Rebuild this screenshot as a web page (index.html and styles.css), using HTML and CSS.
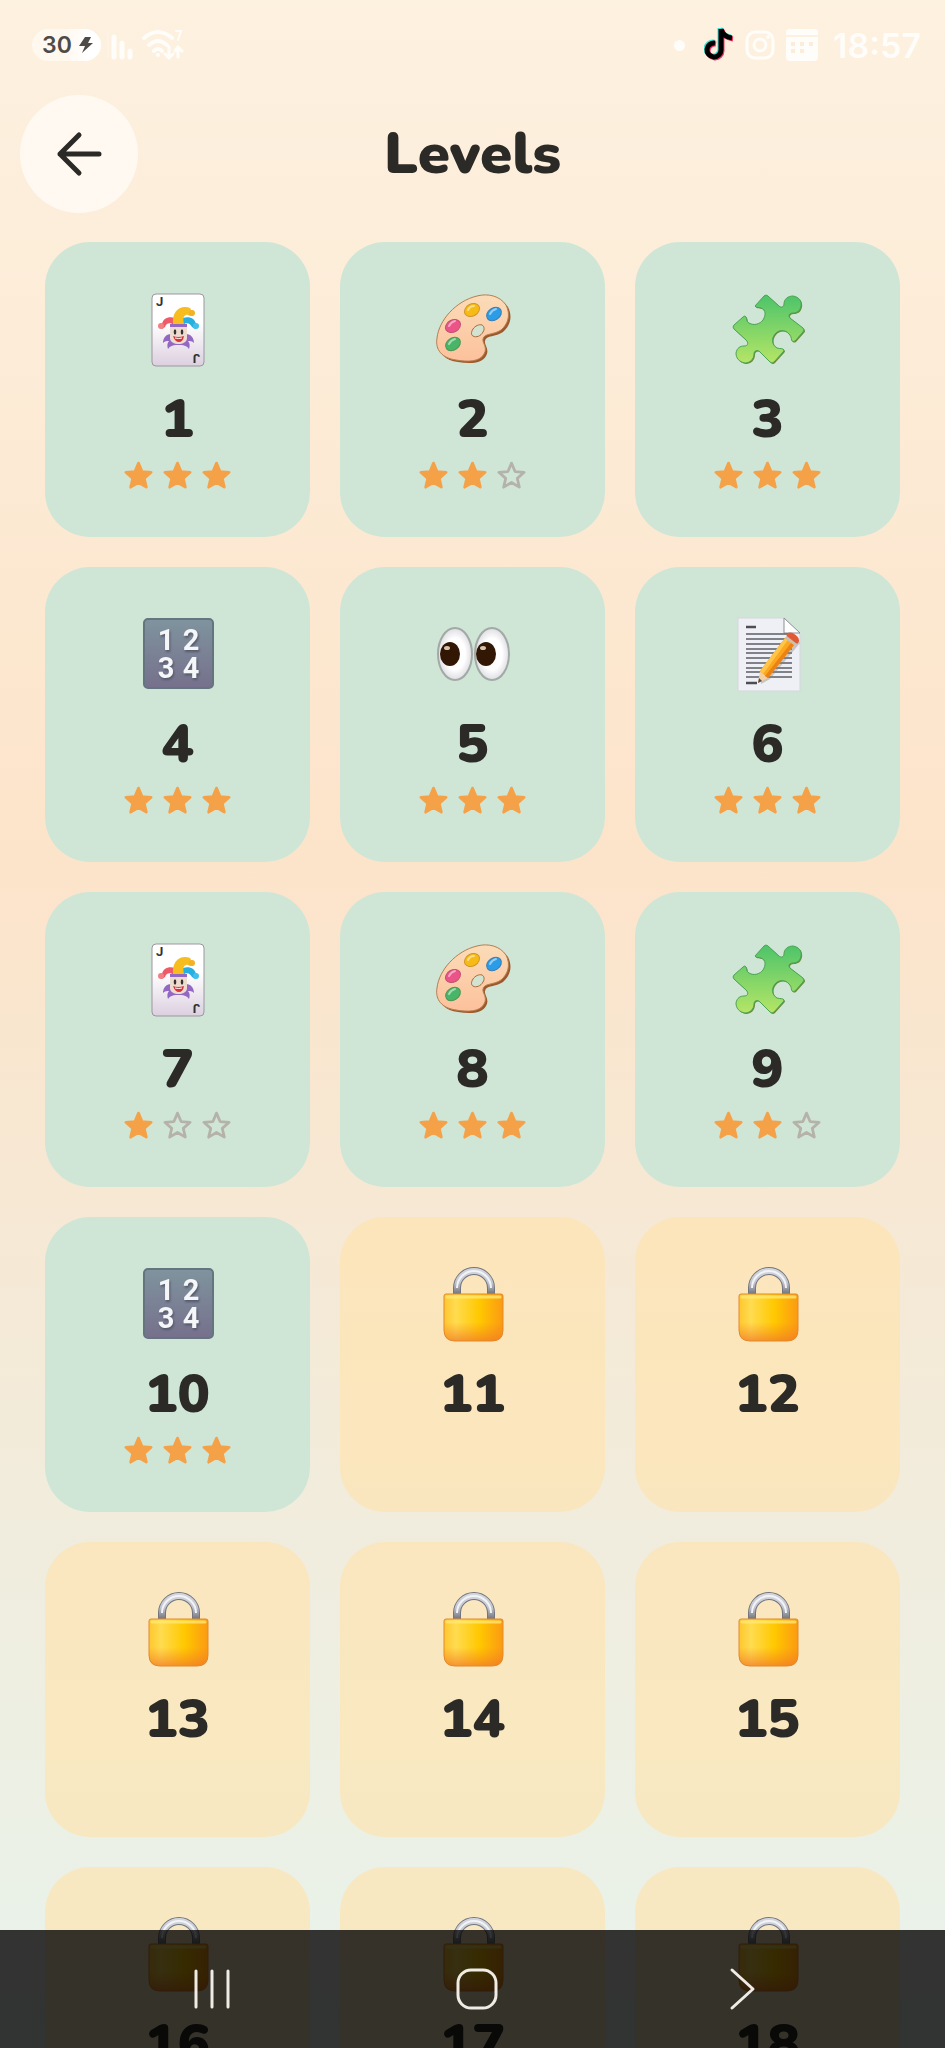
FILE: index.html
```
<!DOCTYPE html>
<html lang="en">

<head>
    <meta charset="UTF-8">
    <meta name="viewport" content="width=device-width, initial-scale=1.0">
    <title>Levels</title>
    <link rel="stylesheet" href="styles.css">
</head>

<body>
    <!-- icon shapes, reused by the cards -->
    <svg class="sprite" width="0" height="0" aria-hidden="true">
        <defs>
            <linearGradient id="paper" x1="0" y1="0" x2="0" y2="1">
                <stop offset="0.4" stop-color="#ffffff" />
                <stop offset="1" stop-color="#dccfdf" />
            </linearGradient>
            <linearGradient id="wood" x1="0" y1="0" x2="0" y2="1">
                <stop offset="0" stop-color="#fbdcb8" />
                <stop offset="1" stop-color="#fcc19c" />
            </linearGradient>
            <linearGradient id="green" x1="0" y1="0" x2="0" y2="1">
                <stop offset="0" stop-color="#4cc46a" />
                <stop offset="1" stop-color="#b6e566" />
            </linearGradient>
            <linearGradient id="slate" x1="0" y1="0" x2="0" y2="1">
                <stop offset="0" stop-color="#7f949e" />
                <stop offset="1" stop-color="#76708c" />
            </linearGradient>
            <linearGradient id="gold" x1="0" y1="0" x2="1" y2="0">
                <stop offset="0" stop-color="#ffc62f" />
                <stop offset="0.2" stop-color="#ffdc50" />
                <stop offset="0.6" stop-color="#ffc800" />
                <stop offset="1" stop-color="#fb9a12" />
            </linearGradient>
            <linearGradient id="goldShade" x1="0" y1="0" x2="0" y2="1">
                <stop offset="0.6" stop-color="#f58220" stop-opacity="0" />
                <stop offset="1" stop-color="#f0752a" stop-opacity="0.7" />
            </linearGradient>
            <linearGradient id="steel" gradientUnits="userSpaceOnUse" x1="0" y1="0" x2="0" y2="26">
                <stop offset="0" stop-color="#d6d8e0" />
                <stop offset="0.6" stop-color="#c4c6cf" />
                <stop offset="1" stop-color="#787a84" />
            </linearGradient>
            <radialGradient id="eyeball">
                <stop offset="0.6" stop-color="#ffffff" />
                <stop offset="1" stop-color="#dedee4" />
            </radialGradient>
        </defs>

        <symbol id="joker" viewBox="0 0 76 76">
            <rect x="12" y="2" width="52" height="72" rx="4" fill="url(#paper)" stroke="#9d969f" />
            <text class="joker-letter" x="16" y="14">J</text>
            <text class="joker-letter" x="16" y="14" transform="rotate(180 38 38)">J</text>
            <path d="M31 42c-5 0-8 4-8 9 2-2 4-2 6-2-2 2-2 5-1 8 2-3 5-4 8-4h5c3 0 6 1 8 4 1-3 1-6-1-8 2 0 4 0 6 2 0-5-3-9-8-9z" fill="#9368c4" />
            <path d="M34 33c-4-3-8-2-9 2l-3 2c-3-1-3-4 0-5 1-5 6-8 13-6z" fill="#ef5a68" />
            <path d="M43 33c3-3 7-2 9 2l3 2c3-1 4-4 1-5-1-5-6-8-13-6z" fill="#27afe0" />
            <path d="M33 32c-1-10 4-17 12-17 4 0 6 1 6 3 4 0 4 6 0 6-2 0-3-2-5-1-3 1-3 4-2 9z" fill="#f7bd1e" />
            <circle cx="21" cy="34" r="3" fill="#f27f82" />
            <circle cx="52" cy="21" r="3" fill="#f2b129" />
            <circle cx="56" cy="34" r="3" fill="#45bfe8" />
            <path d="M30 32h17v14c0 8-17 8-17 0z" fill="#eddccf" />
            <path d="M30 32h17v3H30z" fill="#9368c4" />
            <ellipse cx="35" cy="40" rx="1.3" ry="2.8" fill="#333" />
            <ellipse cx="42" cy="40" rx="1.3" ry="2.8" fill="#333" />
            <path d="M33 44q5 2 11 0q-1 6-5 6t-6-6z" fill="#d8343c" />
            <path d="M35 46q4 1 7 0" stroke="#fff" fill="none" />
        </symbol>

        <symbol id="palette" viewBox="0 0 76 76">
            <path d="M42 5C53 2 66 5 72 14c5 10 2 19-5 25-7 5-17 3-18 9-1 4 5 8 1 15-4 8-17 8-28 6C8 67 1 59 3 47 5 28 22 10 42 5z" fill="#9c5a2c" transform="translate(1 1)" />
            <path d="M42 4C53 1 65 4 71 13c5 10 2 19-5 25-7 5-17 3-18 9-1 4 5 8 1 15-4 8-17 8-28 6C7 66 0 58 2 46 4 28 21 9 42 4z" fill="url(#wood)" stroke="#b77d4e" />
            <path d="M38 44c3 2 8 0 10-4 2-3 1-6-1-7-3-1-7 1-9 4s-2 6 0 7z" fill="#d2e3d2" stroke="#a8693c" />
            <ellipse cx="37" cy="18" rx="8" ry="6" transform="rotate(-30 37 18)" fill="#f6bb15" stroke="#d2952a" />
            <ellipse cx="59" cy="22" rx="8" ry="6" transform="rotate(-35 59 22)" fill="#2b9ce8" stroke="#3a7eb0" />
            <ellipse cx="18" cy="34" rx="8" ry="6" transform="rotate(-30 18 34)" fill="#ec5389" stroke="#c2506e" />
            <ellipse cx="18" cy="52" rx="8" ry="6" transform="rotate(-35 18 52)" fill="#48b567" stroke="#4d9456" />
            <path d="M33 18q2-4 6-4M55 22q2-4 6-5M14 34q2-4 6-5M14 52q2-4 6-5" stroke="#fff" stroke-opacity="0.5" stroke-width="2" fill="none" stroke-linecap="round" />
        </symbol>

        <symbol id="puzzle" viewBox="0 0 76 76">
            <path d="M25 14L34 4q2-2 4 0l11 10c2 2 5 1 5-2 0-5 4-8 9-8 6 1 9 5 8 10-1 5-4 7-8 7-4 0-5 3-3 5l13 10q2 2 0 4l-8 9q-2 1-3 0c-1-1 0-4-3-7-4-5-11-4-14 0-4 5-3 11 2 14 3 1 6 0 7 2q0 1-1 2L44 70q-2 2-4 0L30 60c-3-3-6-1-6 2 0 5-4 9-9 9-6-1-9-5-9-10 1-5 4-7 8-7 4 0 5-3 2-6L4 37q-2-2 0-4l9-8q2-2 3 0c1 2 0 4 3 6 5 3 11 1 14-3 3-5 3-10-2-12-3-1-5 0-6-2z" fill="#6d8a3c" transform="translate(1 1)" />
            <path d="M25 14L34 4q2-2 4 0l11 10c2 2 5 1 5-2 0-5 4-8 9-8 6 1 9 5 8 10-1 5-4 7-8 7-4 0-5 3-3 5l13 10q2 2 0 4l-8 9q-2 1-3 0c-1-1 0-4-3-7-4-5-11-4-14 0-4 5-3 11 2 14 3 1 6 0 7 2q0 1-1 2L44 70q-2 2-4 0L30 60c-3-3-6-1-6 2 0 5-4 9-9 9-6-1-9-5-9-10 1-5 4-7 8-7 4 0 5-3 2-6L4 37q-2-2 0-4l9-8q2-2 3 0c1 2 0 4 3 6 5 3 11 1 14-3 3-5 3-10-2-12-3-1-5 0-6-2z" fill="url(#green)" stroke="#4ba352" />
        </symbol>

        <symbol id="numbers" viewBox="0 0 76 76">
            <rect x="4" y="2" width="69" height="69" rx="4" fill="url(#slate)" stroke="#65757f" stroke-width="2" />
            <g class="digits">
                <text x="26" y="33">1</text>
                <text x="51" y="33">2</text>
                <text x="26" y="61">3</text>
                <text x="51" y="61">4</text>
            </g>
        </symbol>

        <symbol id="eyes" viewBox="0 0 76 76">
            <g fill="url(#eyeball)" stroke="#a3aaa5" stroke-width="2">
                <ellipse cx="20" cy="37" rx="17" ry="26" />
                <ellipse cx="57" cy="37" rx="17" ry="26" />
            </g>
            <g fill="#321705">
                <ellipse cx="15" cy="37" rx="10" ry="12" />
                <ellipse cx="51" cy="37" rx="10" ry="12" />
            </g>
            <g fill="#d8c4ad">
                <ellipse cx="12" cy="31" rx="3" ry="2" />
                <ellipse cx="48" cy="31" rx="3" ry="2" />
            </g>
        </symbol>

        <symbol id="memo" viewBox="0 0 76 76">
            <path d="M8 1h46l16 16v57H8z" fill="#eff0f5" stroke="#d3d6dc" />
            <path d="M54 1v15h16z" fill="#fff" stroke="#8c8f96" />
            <path d="M16 17h46M16 22h46M16 27h46M16 32h46M16 36h46M16 41h46M16 46h46M16 51h46M16 55h46M16 60h46" stroke="#5c5e66" stroke-width="1.5" />
            <path d="M16 10h10M16 66h11" stroke="#4c4e56" stroke-width="2.5" />
            <path d="M31 67l9-5 30-36-6-8-5-2-29 38z" fill="#8a8078" opacity="0.4" />
            <path d="M28 66l2-12 8 7z" fill="#f3cfa2" />
            <path d="M28 66l1-5 3 3z" fill="#5a4a44" />
            <path d="M30 54L55 21l9 7-26 33z" fill="#fda71d" />
            <path d="M30 54L55 21l3 2-25 34z" fill="#ffc44a" />
            <path d="M35 59L61 26l3 2-26 33z" fill="#ec8215" />
            <path d="M55 21l3-3 9 7-3 3z" fill="#cdbfb2" />
            <path d="M58 18c3-3 12 4 9 7z" fill="#e05b35" stroke="#e05b35" stroke-width="3" stroke-linejoin="round" />
        </symbol>

        <symbol id="lock" viewBox="0 0 76 76">
            <path d="M22 28v-7a17 17 0 0 1 34 0v7" fill="none" stroke="#73757e" stroke-width="8" />
            <path d="M22 28v-7a17 17 0 0 1 34 0v7" fill="none" stroke="url(#steel)" stroke-width="6" />
            <path d="M22 21a17 17 0 0 1 34 0" fill="none" stroke="#f2f3f7" stroke-width="2" />
            <path d="M11 27h55q2 0 2 2v34q0 11-11 11H20q-11 0-11-11V29q0-2 2-2z" fill="url(#gold)" />
            <path d="M11 27h55q2 0 2 2v34q0 11-11 11H20q-11 0-11-11V29q0-2 2-2z" fill="url(#goldShade)" stroke="#e18a2c" />
            <path d="M12 30h53" stroke="#ffe873" stroke-width="3" stroke-linecap="round" opacity="0.8" />
        </symbol>

        <symbol id="star" viewBox="0 0 24 24">
            <path d="M12 3l2.600 6.100 6.600.600-5 4.400 1.500 6.400-5.700-3.400-5.700 3.400 1.500-6.400-5-4.400 6.600-.600z" stroke-width="2" stroke-linejoin="round" />
        </symbol>
    </svg>

    <div class="app">
        <div class="status-bar">
            <div class="status-left">
                <span class="battery">30
                    <svg width="14" height="18" viewBox="0 0 14 18"><path d="M6 1h6L9 7h5L3 17l3-7H0z" fill="#4d4a47" /></svg>
                </span>
                <svg width="28" height="32" viewBox="0 0 28 32" stroke="#fffdf9" stroke-linecap="round">
                    <path d="M1 4v24" stroke-width="1" opacity="0.5" />
                    <path d="M7 8v20M15 14v14M23 22v6" stroke-width="5" />
                </svg>
                <svg width="44" height="34" viewBox="0 0 44 34" fill="none" stroke="#fffdf9" stroke-width="4" stroke-linecap="round">
                    <path d="M3 10q14-12 28 0M8 17q9-8 18 0M13 23q4-4 8 0" />
                    <circle cx="17" cy="27" r="2" fill="#fffdf9" stroke="none" />
                    <path d="M35 3h5l-3 9" stroke-width="2" />
                    <path d="M28 19v10M24 26l4 4 4-4M37 29V20M34 23l3-4 4 4" stroke-width="3" />
                </svg>
            </div>
            <div class="status-right">
                <span class="dot"></span>
                <svg width="30" height="36" viewBox="0 0 30 36" fill="none" stroke-width="5">
                    <path d="M17 2v21a7 7 0 1 1-6-7M17 2q2 8 11 9" stroke="#35e4dc" transform="translate(-1 -1)" />
                    <path d="M17 2v21a7 7 0 1 1-6-7M17 2q2 8 11 9" stroke="#f5315f" transform="translate(1 1)" />
                    <path d="M17 2v21a7 7 0 1 1-6-7M17 2q2 8 11 9" stroke="#000" />
                </svg>
                <svg width="30" height="30" viewBox="0 0 30 30" fill="none" stroke="#fffdf9" stroke-width="3">
                    <rect x="2" y="2" width="26" height="26" rx="8" />
                    <circle cx="15" cy="15" r="6" />
                    <circle cx="23" cy="7" r="1" stroke-width="2" />
                </svg>
                <svg width="32" height="32" viewBox="0 0 32 32">
                    <path d="M3 0h26q3 0 3 3v3H0V3q0-3 3-3zM0 8h32v20q0 4-4 4H4q-4 0-4-4z" fill="#fffdf9" />
                    <path d="M5 15h4M14 15h4M23 15h4M5 22h4M14 22h4" stroke="#fcecd8" stroke-width="4" />
                </svg>
                <span class="time">18:57</span>
            </div>
        </div>

        <header class="header">
            <button class="back" aria-label="Back">
                <svg width="46" height="46" viewBox="0 0 46 46" fill="none" stroke="#2b2a26" stroke-width="5" stroke-linecap="round" stroke-linejoin="round">
                    <path d="M43 23H4M23 4L4 23l19 19" />
                </svg>
            </button>
            <h1>Levels</h1>
        </header>

        <main class="levels" id="levels"></main>

        <nav class="nav-bar">
            <button aria-label="Recent apps">
                <svg width="44" height="44" viewBox="0 0 44 44"><path d="M6 4v36M22 4v36M38 4v36" /></svg>
            </button>
            <button aria-label="Home">
                <svg width="44" height="44" viewBox="0 0 44 44"><rect x="3" y="3" width="38" height="38" rx="13" /></svg>
            </button>
            <button aria-label="Go back">
                <svg width="44" height="44" viewBox="0 0 44 44"><path d="M12 3l21 19-21 19" /></svg>
            </button>
        </nav>
    </div>

    <script>
        const icons = ['joker', 'palette', 'puzzle', 'numbers', 'eyes', 'memo'];
        const scores = [3, 2, 3, 3, 3, 3, 1, 3, 2, 3];
        const total = 18;

        function makeStars(score) {
            let html = '';
            for (let i = 0; i < 3; i++) {
                html += `<svg class="star ${i < score ? 'star-on' : ''}"><use href="#star"></use></svg>`;
            }
            return html;
        }

        function makeCard(number) {
            const locked = number > scores.length;
            const icon = locked ? 'lock' : icons[(number - 1) % icons.length];
            return `<button class="card ${locked ? 'card-locked' : ''}" ${locked ? 'disabled' : ''}>
                <svg class="card-icon"><use href="#${icon}"></use></svg>
                <span class="number">${number}</span>
                <span class="stars">${locked ? '' : makeStars(scores[number - 1])}</span>
            </button>`;
        }

        let cards = '';
        for (let n = 1; n <= total; n++) {
            cards += makeCard(n);
        }
        document.getElementById('levels').innerHTML = cards;
    </script>
</body>

</html>
```
FILE: styles.css
```
* {
    box-sizing: border-box;
}

body {
    margin: 0;
    font-family: Nunito, Lato, sans-serif;
    color: #2b2a26;
}

button {
    border: none;
    padding: 0;
    font-family: inherit;
    color: inherit;
    cursor: pointer;
}

svg {
    display: block;
    flex-shrink: 0;
}

.sprite {
    position: absolute;
}

.app {
    height: 100vh;
    overflow: hidden;
    display: flex;
    flex-direction: column;
    background: linear-gradient(#fdf1e0 0%, #fce4ca 42%, #e8f3ec 100%);
}

.status-bar {
    height: 90px;
    flex-shrink: 0;
    padding: 0 24px 0 32px;
    display: flex;
    justify-content: space-between;
    align-items: center;
    font-family: Inter, sans-serif;
}

.status-left {
    display: flex;
    align-items: center;
    gap: 6px;
}

.battery {
    display: flex;
    align-items: center;
    gap: 7px;
    height: 32px;
    padding: 0 8px 0 10px;
    border-radius: 16px;
    background: linear-gradient(to right, #fff8ef 50%, #ffffff 80%);
    color: #4d4a47;
    font-size: 23px;
    font-weight: 600;
}

.status-right {
    display: flex;
    align-items: center;
    gap: 11px;
    color: #fffdf9;
}

.dot {
    width: 11px;
    height: 11px;
    margin-right: 8px;
    border-radius: 50%;
    background-color: #fffdf9;
}

.time {
    margin-left: 4px;
    font-size: 34px;
    font-weight: 600;
}

.header {
    display: grid;
    grid-template-columns: 118px 1fr 118px;
    align-items: center;
    flex-shrink: 0;
    padding: 5px 20px 29px;
}

.header h1 {
    margin: 0;
    text-align: center;
    font-size: 58px;
    font-weight: 900;
    line-height: 64px;
}

.back {
    width: 118px;
    height: 118px;
    display: flex;
    align-items: center;
    justify-content: center;
    border-radius: 50%;
    background-color: #fff9f1;
}

.levels {
    display: grid;
    grid-template-columns: repeat(3, 1fr);
    align-content: start;
    gap: 30px;
    padding: 0 45px;
}

.card {
    display: flex;
    flex-direction: column;
    align-items: center;
    padding: 50px 0 45px;
    border-radius: 45px;
    background-color: #cfe6d7;
}

.card-locked {
    background-color: rgba(255, 228, 173, 0.65);
    color: #2b2a26;
}

.card-icon {
    width: 76px;
    height: 76px;
}

.number {
    margin-top: 19px;
    font-size: 54px;
    font-weight: 900;
    line-height: 64px;
}

.stars {
    display: flex;
    gap: 6px;
    height: 33px;
    margin-top: 8px;
}

.star {
    width: 33px;
    height: 33px;
    fill: none;
    stroke: #b5b3a9;
}

.star-on {
    fill: #f4a148;
    stroke: #f4a148;
}

.joker-letter {
    font-family: Roboto, sans-serif;
    font-size: 13px;
    font-weight: 700;
    fill: #333;
}

.digits {
    font-family: Roboto, sans-serif;
    font-size: 29px;
    font-weight: 700;
    text-anchor: middle;
    fill: #f5f6f8;
    filter: drop-shadow(1px 2px 1px #55586a);
}

.nav-bar {
    position: fixed;
    left: 0;
    right: 0;
    bottom: 0;
    height: 118px;
    padding: 0 71px 0 80px;
    display: grid;
    grid-template-columns: repeat(3, 1fr);
    background-color: rgba(0, 0, 0, 0.79);
}

.nav-bar button {
    display: flex;
    align-items: center;
    justify-content: center;
    background: none;
}

.nav-bar svg {
    fill: none;
    stroke: #efebe5;
    stroke-width: 3;
    stroke-linecap: round;
    stroke-linejoin: round;
}
```
